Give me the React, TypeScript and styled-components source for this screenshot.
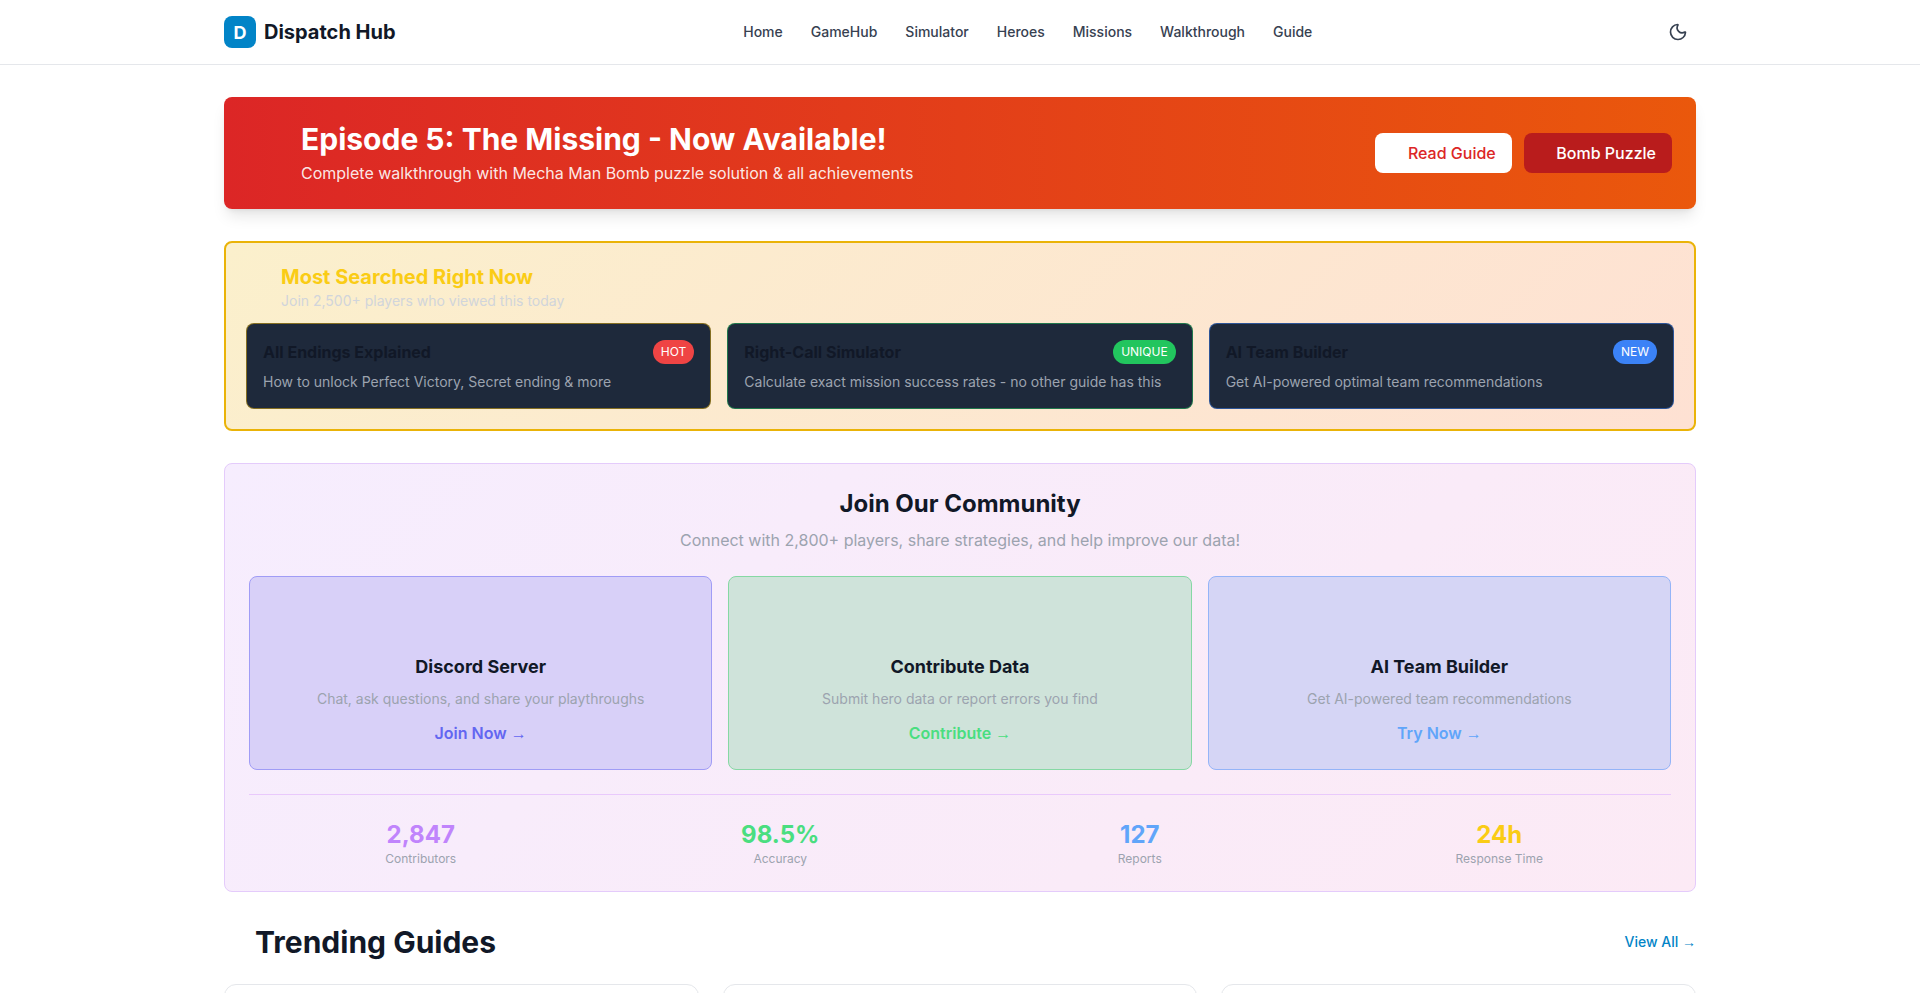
import React from "react";
import styled, { createGlobalStyle } from "styled-components";
import { Moon } from "lucide-react";

const Global = createGlobalStyle`
  * { box-sizing: border-box; }
  html, body { margin: 0; padding: 0; background: #fff; }
  body { font-family: Inter, "Liberation Sans", sans-serif; color: #111827; }
  a { text-decoration: none; color: inherit; }
`;

const Header = styled.header`
  height: 65px;
  background: #fff;
  border-bottom: 1px solid #e5e7eb;
`;
const HeaderInner = styled.div`
  max-width: 1536px;
  height: 64px;
  margin: 0 auto;
  padding: 0 32px;
  display: flex;
  align-items: center;
  justify-content: space-between;
`;
const Brand = styled.a`
  display: flex;
  align-items: center;
  gap: 8px;
`;
const LogoBox = styled.span`
  width: 32px;
  height: 32px;
  border-radius: 8px;
  background: #0284c7;
  color: #fff;
  font-size: 18px;
  font-weight: 700;
  display: flex;
  align-items: center;
  justify-content: center;
`;
const BrandName = styled.span`
  font-size: 20px;
  line-height: 28px;
  font-weight: 700;
  color: #111827;
`;
const Nav = styled.nav`
  display: flex;
  gap: 28px;
`;
const NavLink = styled.a`
  font-size: 14px;
  line-height: 20px;
  font-weight: 500;
  color: #374151;
`;
const ThemeButton = styled.button`
  width: 36px;
  height: 36px;
  padding: 8px;
  border: 0;
  border-radius: 8px;
  background: transparent;
  color: #374151;
  display: flex;
  align-items: center;
  justify-content: center;
`;

const Main = styled.main`
  max-width: 1536px;
  margin: 0 auto;
  padding: 32px;
  display: flex;
  flex-direction: column;
  gap: 32px;
`;

const Hero = styled.section`
  height: 112px;
  padding: 24px;
  border-radius: 8px;
  background: linear-gradient(90deg, #dc2626, #ea580c);
  box-shadow: 0 10px 15px -3px rgba(0, 0, 0, 0.1), 0 4px 6px -4px rgba(0, 0, 0, 0.1);
  display: flex;
  align-items: center;
  justify-content: space-between;
`;
const HeroText = styled.div`
  padding-left: 53px;
  color: #fff;
`;
const HeroTitle = styled.h1`
  margin: 0 0 4px;
  font-size: 30px;
  line-height: 36px;
  font-weight: 700;
`;
const HeroSub = styled.p`
  margin: 0;
  font-size: 16px;
  line-height: 24px;
  color: rgba(255, 255, 255, 0.9);
`;
const HeroActions = styled.div`
  display: flex;
  gap: 12px;
`;
const HeroButton = styled.a<{ $solid?: boolean }>`
  height: 40px;
  padding: 8px 16px 8px 32.5px;
  border-radius: 8px;
  font-size: 16px;
  line-height: 24px;
  font-weight: 500;
  background: ${(p) => (p.$solid ? "#fff" : "#b91c1c")};
  color: ${(p) => (p.$solid ? "#dc2626" : "#fff")};
`;

const Searched = styled.section`
  padding: 20px;
  border: 2px solid #eab308;
  border-radius: 8px;
  background: linear-gradient(135deg, rgb(251, 240, 204), rgb(254, 225, 211));
`;
const SearchedHead = styled.div`
  padding-left: 35px;
  margin-bottom: 12px;
`;
const SearchedTitle = styled.h2`
  margin: 0;
  font-size: 20px;
  line-height: 28px;
  font-weight: 700;
  color: #facc15;
`;
const SearchedSub = styled.p`
  margin: 0;
  font-size: 14px;
  line-height: 20px;
  color: #d1d5db;
`;
const TripleGrid = styled.div`
  display: grid;
  grid-template-columns: repeat(3, 1fr);
  gap: 16px;
`;
const DarkCard = styled.a<{ $border: string }>`
  display: block;
  padding: 16px;
  border: 1px solid ${(p) => p.$border};
  border-radius: 8px;
  background: #1e293b;
`;
const DarkCardTop = styled.div`
  display: flex;
  align-items: flex-start;
  justify-content: space-between;
  margin-bottom: 8px;
`;
const DarkCardTitle = styled.h3`
  margin: 0;
  font-size: 16px;
  line-height: 24px;
  font-weight: 700;
  color: #111827;
`;
const Badge = styled.span<{ $bg: string }>`
  padding: 4px 8px;
  border-radius: 12px;
  background: ${(p) => p.$bg};
  color: #fff;
  font-size: 12px;
  line-height: 16px;
`;
const DarkCardText = styled.p`
  margin: 0;
  font-size: 14px;
  line-height: 20px;
  color: #9ca3af;
`;

const Community = styled.section`
  padding: 24px;
  border: 1px solid #e4cbfb;
  border-radius: 8px;
  background: linear-gradient(135deg, #f6edfe, #fceaf5);
`;
const CommunityTitle = styled.h2`
  margin: 0 0 8px;
  text-align: center;
  font-size: 24px;
  line-height: 32px;
  font-weight: 700;
  color: #111827;
`;
const CommunitySub = styled.p`
  margin: 0 0 24px;
  text-align: center;
  font-size: 16px;
  line-height: 24px;
  color: #9ca3af;
`;
const ActionCard = styled.a<{ $bg: string; $border: string }>`
  display: flex;
  flex-direction: column;
  align-items: center;
  padding: 76px 24px 24px;
  border: 1px solid ${(p) => p.$border};
  border-radius: 8px;
  background: ${(p) => p.$bg};
`;
const ActionTitle = styled.h3`
  margin: 0 0 8px;
  font-size: 18px;
  line-height: 28px;
  font-weight: 700;
  color: #111827;
`;
const ActionText = styled.p`
  margin: 0 0 12px;
  font-size: 14px;
  line-height: 20px;
  color: #9ca3af;
`;
const ActionLink = styled.span<{ $color: string }>`
  display: block;
  height: 24px;
  font-size: 16px;
  line-height: 24px;
  font-weight: 600;
  color: ${(p) => p.$color};
`;
const Arrow = styled.span`
  font-family: "Liberation Sans", sans-serif;
  font-weight: 400;
  line-height: 1;
`;
const Stats = styled.div`
  margin-top: 24px;
  padding-top: 24px;
  border-top: 1px solid #e9c9fc;
  display: grid;
  grid-template-columns: repeat(4, 1fr);
  gap: 16px;
`;
const Stat = styled.div`
  text-align: center;
`;
const StatValue = styled.div<{ $color: string }>`
  font-size: 24px;
  line-height: 32px;
  font-weight: 700;
  color: ${(p) => p.$color};
`;
const StatLabel = styled.div`
  font-size: 12px;
  line-height: 16px;
  color: #9ca3af;
`;

const SectionHead = styled.div`
  display: flex;
  align-items: center;
  justify-content: space-between;
  height: 36px;
  margin-bottom: 24px;
`;
const SectionTitle = styled.h2`
  margin: 0;
  padding-left: 31px;
  font-size: 30px;
  line-height: 36px;
  font-weight: 700;
  color: #111827;
`;
const ViewAll = styled.a`
  font-size: 14px;
  line-height: 20px;
  font-weight: 500;
  color: #0284c7;
`;
const GuideGrid = styled.div`
  display: grid;
  grid-template-columns: repeat(3, 1fr);
  gap: 24px;
`;
const GuideCard = styled.article`
  height: 220px;
  border: 1px solid #e5e7eb;
  border-radius: 12px;
  background: #fff;
`;

const links = ["Home", "GameHub", "Simulator", "Heroes", "Missions", "Walkthrough", "Guide"];
const searched = [
  { t: "All Endings Explained", d: "How to unlock Perfect Victory, Secret ending & more", b: "HOT", bg: "#ef4444", bc: "rgba(234,179,8,0.5)" },
  { t: "Right-Call Simulator", d: "Calculate exact mission success rates - no other guide has this", b: "UNIQUE", bg: "#22c55e", bc: "rgba(34,197,94,0.5)" },
  { t: "AI Team Builder", d: "Get AI-powered optimal team recommendations", b: "NEW", bg: "#3b82f6", bc: "rgba(59,130,246,0.5)" },
];
const actions = [
  { t: "Discord Server", d: "Chat, ask questions, and share your playthroughs", l: "Join Now", c: "#6366f1", bg: "#d8d0f8", bc: "#a09cf6" },
  { t: "Contribute Data", d: "Submit hero data or report errors you find", l: "Contribute", c: "#4ade80", bg: "#cfe3da", bc: "#86d8a4" },
  { t: "AI Team Builder", d: "Get AI-powered team recommendations", l: "Try Now", c: "#60a5fa", bg: "#d5d5f5", bc: "#94b4f8" },
];
const stats = [
  { v: "2,847", l: "Contributors", c: "#c084fc" },
  { v: "98.5%", l: "Accuracy", c: "#4ade80" },
  { v: "127", l: "Reports", c: "#60a5fa" },
  { v: "24h", l: "Response Time", c: "#facc15" },
];

export default function App() {
  return (
    <>
      <Global />
      <Header>
        <HeaderInner>
          <Brand href="#">
            <LogoBox>D</LogoBox>
            <BrandName>Dispatch Hub</BrandName>
          </Brand>
          <Nav>
            {links.map((l) => (
              <NavLink key={l} href="#">{l}</NavLink>
            ))}
          </Nav>
          <ThemeButton aria-label="Toggle theme">
            <Moon size={20} />
          </ThemeButton>
        </HeaderInner>
      </Header>
      <Main>
        <Hero>
          <HeroText>
            <HeroTitle>Episode 5: The Missing - Now Available!</HeroTitle>
            <HeroSub>Complete walkthrough with Mecha Man Bomb puzzle solution &amp; all achievements</HeroSub>
          </HeroText>
          <HeroActions>
            <HeroButton $solid href="#">Read Guide</HeroButton>
            <HeroButton href="#">Bomb Puzzle</HeroButton>
          </HeroActions>
        </Hero>
        <Searched>
          <SearchedHead>
            <SearchedTitle>Most Searched Right Now</SearchedTitle>
            <SearchedSub>Join 2,500+ players who viewed this today</SearchedSub>
          </SearchedHead>
          <TripleGrid>
            {searched.map((s) => (
              <DarkCard key={s.t} $border={s.bc} href="#">
                <DarkCardTop>
                  <DarkCardTitle>{s.t}</DarkCardTitle>
                  <Badge $bg={s.bg}>{s.b}</Badge>
                </DarkCardTop>
                <DarkCardText>{s.d}</DarkCardText>
              </DarkCard>
            ))}
          </TripleGrid>
        </Searched>
        <Community>
          <CommunityTitle>Join Our Community</CommunityTitle>
          <CommunitySub>Connect with 2,800+ players, share strategies, and help improve our data!</CommunitySub>
          <TripleGrid>
            {actions.map((a) => (
              <ActionCard key={a.t} $bg={a.bg} $border={a.bc} href="#">
                <ActionTitle>{a.t}</ActionTitle>
                <ActionText>{a.d}</ActionText>
                <ActionLink $color={a.c}>{a.l} <Arrow>→</Arrow></ActionLink>
              </ActionCard>
            ))}
          </TripleGrid>
          <Stats>
            {stats.map((s) => (
              <Stat key={s.l}>
                <StatValue $color={s.c}>{s.v}</StatValue>
                <StatLabel>{s.l}</StatLabel>
              </Stat>
            ))}
          </Stats>
        </Community>
        <section>
          <SectionHead>
            <SectionTitle>Trending Guides</SectionTitle>
            <ViewAll href="#">View All <Arrow>→</Arrow></ViewAll>
          </SectionHead>
          <GuideGrid>
            <GuideCard />
            <GuideCard />
            <GuideCard />
          </GuideGrid>
        </section>
      </Main>
    </>
  );
}
